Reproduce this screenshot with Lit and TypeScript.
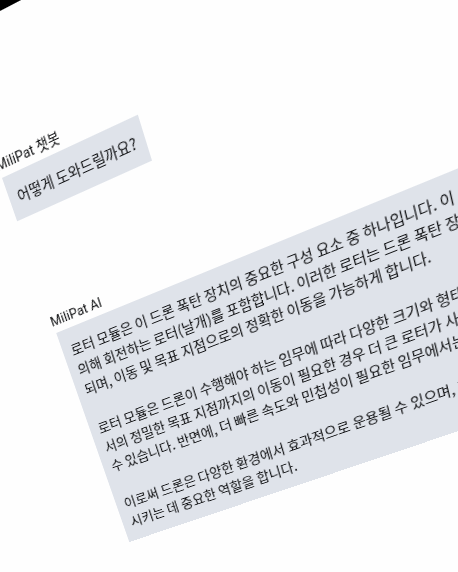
import { LitElement, html, css } from "lit";
import { customElement } from "lit/decorators.js";

interface Message {
  author: string;
  lines: string[];
}

const MESSAGES: Message[] = [
  { author: "MiliPat 챗봇", lines: ["어떻게 도와드릴까요?"] },
  {
    author: "MiliPat AI",
    lines: [
      "로터 모듈은 이 드론 폭탄 장치의 중요한 구성 요소 중 하나입니다. 이 모듈은",
      "의해 회전하는 로터(날개)를 포함합니다. 이러한 로터는 드론 폭탄 장치의",
      "되며, 이동 및 목표 지점으로의 정확한 이동을 가능하게 합니다.",
      "",
      "로터 모듈은 드론이 수행해야 하는 임무에 따라 다양한 크기와 형태로",
      "서의 정밀한 목표 지점까지의 이동이 필요한 경우 더 큰 로터가 사용될",
      "수 있습니다. 반면에, 더 빠른 속도와 민첩성이 필요한 임무에서는 작은",
      "",
      "이로써 드론은 다양한 환경에서 효과적으로 운용될 수 있으며, 작전을",
      "시키는 데 중요한 역할을 합니다.",
    ],
  },
];

@customElement("app-root")
export class AppRoot extends LitElement {
  static styles = css`
    :host {
      display: block;
      height: 100vh;
      overflow: hidden;
      background: #fefefe;
      color: #111214;
      font-family: Roboto, "Noto Sans CJK KR", sans-serif;
    }
    /* The chat lies on a screen seen at an angle: one camera projection for all of it. */
    .screen {
      width: max-content;
      transform-origin: 0 0;
      transform: matrix3d(
        0.79368, -0.41499, 0, -0.000252,
        0.31992, 0.95687, 0, 0.000242,
        0, 0, 1, 0,
        -77.85, -5.07, 0, 0.9569
      );
    }
    .bezel {
      height: 50px;
      background: #000;
    }
    .chat {
      display: flex;
      flex-direction: column;
      align-items: flex-start;
      gap: 106px;
      padding: 127px 0 0 20px;
    }
    .author {
      margin: 0 0 3px -2px;
      font-size: 15px;
      font-weight: 400;
      line-height: 20px;
    }
    .bubble {
      width: max-content;
      padding: 12px 10px;
      background: #dfe3ea;
      font-family: "Noto Sans CJK KR", sans-serif;
      font-size: 16px;
      line-height: 24px;
      white-space: pre;
    }
    .bubble p {
      margin: 0;
    }
  `;

  render() {
    return html`
      <main class="screen">
        <div class="bezel"></div>
        <div class="chat">
          ${MESSAGES.map(
            (m) => html`
              <article>
                <h2 class="author">${m.author}</h2>
                <div class="bubble"><p>${m.lines.join("\n")}</p></div>
              </article>
            `,
          )}
        </div>
      </main>
    `;
  }
}
